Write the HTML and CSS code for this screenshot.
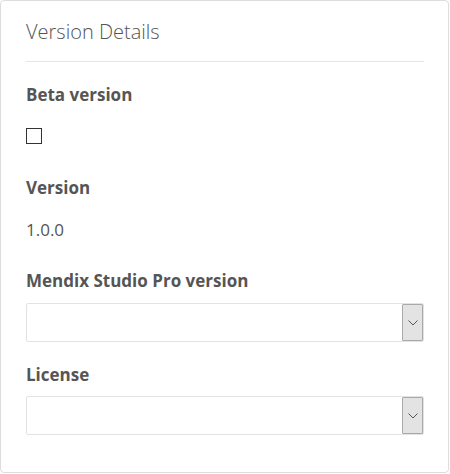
FILE: index.html
```html
<!DOCTYPE html>
<html>
<head>
<meta charset="utf-8">
<link rel="stylesheet" href="styles.css">
</head>
<body>
<div class="card">
  <h2 class="title">Version Details</h2>
  <div class="divider"></div>
  <div class="label label-beta">Beta version</div>
  <div class="checkbox"></div>
  <div class="label label-version">Version</div>
  <div class="value">1.0.0</div>
  <div class="label label-mendix">Mendix Studio Pro version</div>
  <div class="select select-first">
    <div class="select-field"></div>
    <div class="select-btn">
      <svg width="10" height="6" viewBox="0 0 10 6"><path d="M0.5 0.5 L5 5 L9.5 0.5" fill="none" stroke="#555" stroke-width="1"/></svg>
    </div>
  </div>
  <div class="label label-license">License</div>
  <div class="select select-second">
    <div class="select-field"></div>
    <div class="select-btn">
      <svg width="10" height="6" viewBox="0 0 10 6"><path d="M0.5 0.5 L5 5 L9.5 0.5" fill="none" stroke="#555" stroke-width="1"/></svg>
    </div>
  </div>
</div>
</body>
</html>
```
FILE: styles.css
```css
html, body {
  margin: 0;
  padding: 0;
  background: #ffffff;
}
body {
  font-family: "Open Sans", "Noto Sans", sans-serif;
  color: #555555;
}
.card {
  box-sizing: border-box;
  width: 449px;
  height: 473px;
  border: 1px solid #dddddd;
  border-radius: 4px;
  padding: 17px 24px 0 25px;
  display: flex;
  flex-direction: column;
}
.title {
  margin: 0;
  font-size: 20px;
  line-height: 28px;
  font-weight: 300;
  color: #555555;
}
.divider {
  margin-top: 15px;
  height: 1px;
  background: #e5e5e5;
}
.label {
  font-size: 17px;
  line-height: 22px;
  font-weight: 700;
  color: #555555;
}
.label-beta { margin-top: 22px; }
.checkbox {
  margin-top: 22px;
  width: 14px;
  height: 14px;
  border: 1px solid #333333;
  background: #fff;
}
.label-version { margin-top: 33px; }
.value {
  margin-top: 20px;
  font-size: 17px;
  line-height: 22px;
  color: #555555;
}
.label-mendix { margin-top: 29px; }
.select {
  box-sizing: border-box;
  height: 39px;
  width: 398px;
  border: 1px solid #e3e3e3;
  border-radius: 2px;
  display: flex;
  background: #fff;
}
.select-first { margin-top: 11px; }
.label-license { margin-top: 22px; }
.select-second { margin-top: 10px; }
.select-field {
  flex: 1;
}
.select-btn {
  box-sizing: border-box;
  width: 21px;
  height: 37px;
  border: 1px solid #a9a9a9;
  border-radius: 1px;
  background: #e3e3e3;
  display: flex;
  align-items: center;
  justify-content: center;
}
.select-btn svg {
  display: block;
}
```
